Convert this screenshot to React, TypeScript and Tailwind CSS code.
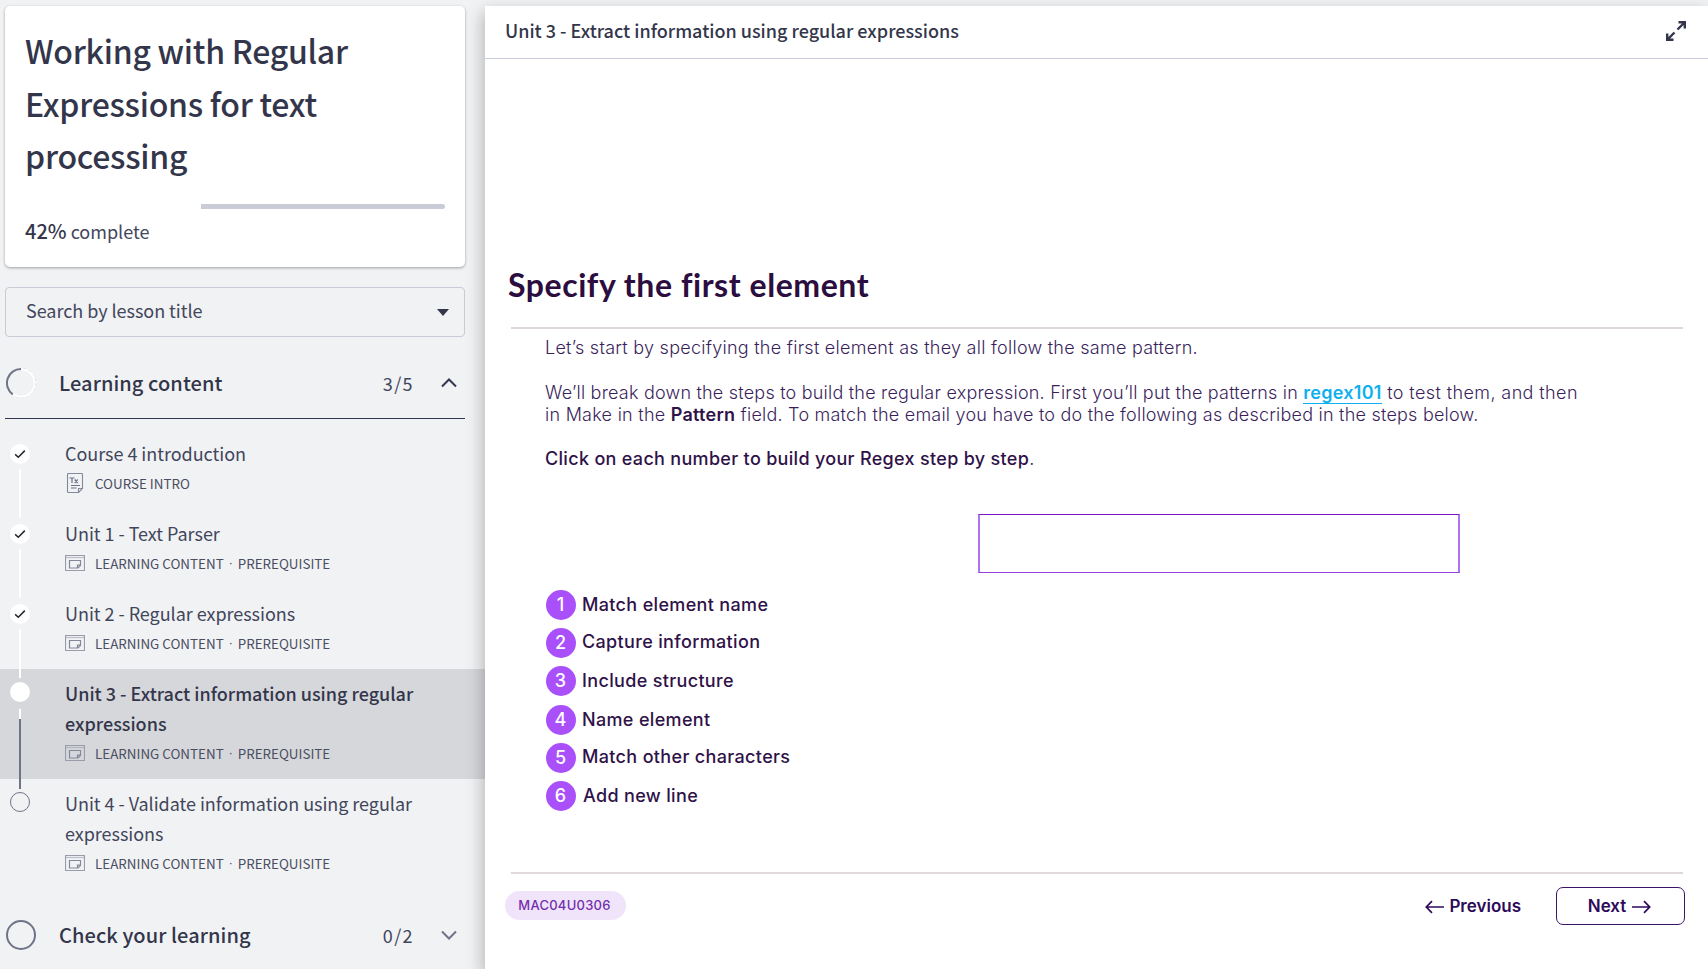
import { ReactNode } from "react";

type Status = "done" | "current" | "todo";

interface Lesson {
  title: string;
  kind: string;
  prerequisite?: boolean;
  status: Status;
}

const lessons: Lesson[] = [
  { title: "Course 4 introduction", kind: "COURSE INTRO", status: "done" },
  { title: "Unit 1 - Text Parser", kind: "LEARNING CONTENT", prerequisite: true, status: "done" },
  { title: "Unit 2 - Regular expressions", kind: "LEARNING CONTENT", prerequisite: true, status: "done" },
  { title: "Unit 3 - Extract information using regular expressions", kind: "LEARNING CONTENT", prerequisite: true, status: "current" },
  { title: "Unit 4 - Validate information using regular expressions", kind: "LEARNING CONTENT", prerequisite: true, status: "todo" },
];

const steps = [
  { label: "Match element name", row: "h-[38px]", text: "pb-[2px]" },
  { label: "Capture information", row: "h-[37px]", text: "pb-[2px]" },
  { label: "Include structure", row: "h-[39px]", text: "" },
  { label: "Name element", row: "h-[39px]", text: "" },
  { label: "Match other characters", row: "h-[38px]", text: "pb-[3px]" },
  { label: "Add new line", row: "h-[38px]", text: "pb-[2px] pl-px" },
];

function CheckIcon() {
  return (
    <svg width="20" height="20" viewBox="0 0 20 20" fill="none">
      <path d="M5.2 10.400 8.300 13.200 14.800 6.600" stroke="#22242e" strokeWidth="1.500" />
    </svg>
  );
}

function TextDocIcon() {
  return (
    <svg width="20" height="20" viewBox="0 0 20 20" fill="none" stroke="#85889a" strokeWidth="1.100">
      <path d="M2.500 1.500q0-1 1-1h13q1 0 1 1V15.500l-4 4h-10q-1 0-1-1z" />
      <path d="M17.500 15.500h-4v4" />
      <path d="M4.500 5H9.500M7 5V10M9.700 6.500l3 3.500M12.700 6.500 9.700 10" strokeWidth="1.200" stroke="#6f7387" />
      <path d="M6 12.500h9M6 15h5.500" stroke="#6f7387" />
    </svg>
  );
}

function WindowIcon() {
  return (
    <svg width="20" height="16" viewBox="0 0 20 16" fill="none" stroke="#9a9cac" strokeWidth="1.200">
      <path d="M.5.5h19v15H.5z" />
      <path d="M.5 2.500h19" opacity=".6" />
      <path d="M4.500 5.500h11v5l-2.500 2.500h-8.500z" stroke="#85889a" />
      <path d="M15.500 10.200h-3v2.800" stroke="#85889a" />
    </svg>
  );
}

function Chevron({ up, color }: { up?: boolean; color: string }) {
  return (
    <svg width="16" height="10" viewBox="0 0 16 10" fill="none" stroke={color} strokeWidth="2">
      <path d={up ? "M1 8.500 8 1.500l7 7" : "M1 1.500l7 7 7-7"} />
    </svg>
  );
}

function Timeline({ index, status }: { index: number; status: Status }) {
  if (status === "done") {
    return (
      <div className="flex w-10 flex-col items-center">
        <div className={index === 0 ? "h-[9px]" : "h-[9px] w-[2px] bg-white"} />
        <div className="mt-[6px] mb-[5px] size-5 shrink-0 rounded-full bg-white">
          <CheckIcon />
        </div>
        <div className="w-[2px] flex-1 bg-white" />
      </div>
    );
  }
  if (status === "current") {
    return (
      <div className="flex w-10 flex-col items-center">
        <div className="h-[9px] w-[2px] bg-white" />
        <div className="mt-1 mb-[7px] size-5 shrink-0 rounded-full bg-white" />
        <div className="h-[10px] w-[2px] bg-white" />
        <div className="w-[2px] flex-1 bg-[#6f7387]" />
      </div>
    );
  }
  return (
    <div className="flex w-10 flex-col items-center">
      <div className="h-[10px] w-[2px] bg-[#6f7387]" />
      <div className="mt-[3px] size-5 rounded-full border border-[#6f7387]" />
    </div>
  );
}

function LessonRow({ lesson, index }: { lesson: Lesson; index: number }) {
  const current = lesson.status === "current";
  return (
    <li className={current ? "flex bg-[#d6d7db]" : "flex"}>
      <Timeline index={index} status={lesson.status} />
      <div className="w-[380px] pt-[9px] pb-[11px] pl-[25px]">
        <div className={current ? "text-[18px] leading-[30px] font-medium" : "text-[18px] leading-[30px] tracking-[-0.040px] text-[#42465b]"}>
          {lesson.title}
        </div>
        <div className="flex h-[30px] items-center text-[13.4px] text-[#4a4e62]">
          <span className="w-[30px]">{lesson.prerequisite ? <WindowIcon /> : <TextDocIcon />}</span>
          <span>{lesson.kind}</span>
          {lesson.prerequisite && (
            <>
              <span className="w-[14px] text-center font-['Liberation_Sans',sans-serif]">·</span>
              <span>PREREQUISITE</span>
            </>
          )}
        </div>
      </div>
    </li>
  );
}

function Section({ title, count, ring, chevron }: { title: string; count: string; ring: ReactNode; chevron: ReactNode }) {
  return (
    <div className="flex h-[30px] items-center">
      <div className="w-[54px] pl-px">{ring}</div>
      <h2 className="flex-1 text-[20px] leading-[30px] font-medium tracking-[0.08px]">{title}</h2>
      <span className="text-[18px] tracking-[1.400px] text-[#42465b]">{count}</span>
      <span className="mr-[8px] ml-[27px]">{chevron}</span>
    </div>
  );
}

function Sidebar() {
  return (
    <aside className="w-[485px] shrink-0 pt-[6px] text-[#33364b]">
      <div className="mx-[5px] h-[261px] w-[460px] rounded-[5px] bg-white px-5 pt-[18px] shadow-[0_1px_3px_rgba(0,0,0,0.35)]">
        <h1 className="text-[32px] leading-[52.500px] font-medium tracking-[-0.260px]">
          Working with Regular
          <br />
          Expressions for text
          <br />
          processing
        </h1>
        <div className="mt-[22px] flex h-[5px]">
          <div className="w-[176px]" />
          <div className="flex-1 rounded-r-full bg-[#c9cbd6]" />
        </div>
        <p className="mt-[7px] text-[18px] leading-[30px] text-[#42465b]">
          <span className="text-[20px] font-medium text-[#33364b]">42%</span> complete
        </p>
      </div>

      <div className="mx-[5px] mt-5 flex h-[50px] w-[460px] items-center justify-between rounded-[4px] border border-[#c9cbd6] pr-[15px] pl-[20px]">
        <span className="pb-[3px] text-[18px] tracking-[-0.040px] text-[#42465b]">Search by lesson title</span>
        <svg width="12" height="7" viewBox="0 0 12 7">
          <path d="M0 0h12L6 7z" fill="#33364b" />
        </svg>
      </div>

      <div className="mx-[5px] mt-[31px] w-[460px] border-b border-[#33374f] pb-5">
        <Section
          title="Learning content"
          count="3/5"
          ring={
            <svg width="30" height="30" viewBox="0 0 30 30" fill="none">
              <circle cx="15" cy="15" r="14.400" stroke="#b4b6c2" strokeWidth="1" strokeDasharray="3 2" />
              <circle cx="15" cy="15" r="13.700" stroke="#fff" strokeWidth="2" />
              <path d="M6.770 26.330A14 14 0 0 1 15 1" stroke="#6f7387" strokeWidth="2" />
            </svg>
          }
          chevron={<Chevron up color="#33374f" />}
        />
      </div>

      <ul className="mt-[10px]">
        {lessons.map((lesson, i) => (
          <LessonRow key={lesson.title} lesson={lesson} index={i} />
        ))}
      </ul>

      <div className="mx-[5px] mt-[31px] w-[460px]">
        <Section
          title="Check your learning"
          count="0/2"
          ring={<div className="size-[30px] rounded-full border-2 border-[#6f7387]" />}
          chevron={<Chevron color="#6f7387" />}
        />
      </div>
    </aside>
  );
}

function Arrow({ left }: { left?: boolean }) {
  return (
    <svg width="19" height="14" viewBox="0 0 19 14" fill="none" stroke="#2d0a5a" strokeWidth="1.700">
      <path d={left ? "M19 7H1.500M7 1.200 1.300 7 7 12.800" : "M0 7h17.500M12 1.200 17.700 7 12 12.800"} />
    </svg>
  );
}

function Content() {
  return (
    <main className="relative z-10 mt-[6px] h-[963px] flex-1 bg-white shadow-[-2px_6px_16px_rgba(0,0,0,0.26)]">
      <header className="flex h-[53px] items-center justify-between border-b border-[#c9cbdc] pr-[22px] pl-5">
        <span className="pb-[4px] font-['Noto_Sans_CJK_SC',sans-serif] text-[18px] leading-[30px] font-medium text-[#33364b]">
          Unit 3 - Extract information using regular expressions
        </span>
        <svg className="-mt-[2px]" width="20" height="20" viewBox="0 0 20 20" fill="none" stroke="#33364b" strokeWidth="2.400">
          <path d="M11.500 8.500 18.500 1.500M12.500 1.200h6.300v6.300M8.500 11.500l-7 7M1.200 12.500v6.300h6.300" />
        </svg>
      </header>

      <div className="pt-[202px] pr-[25px] pl-[26px] font-['Inter',sans-serif] text-[#3b1f5c]">
        <h2 className="-ml-[3px] h-[66px] font-['Lato',sans-serif] text-[32px] leading-[48px] font-bold tracking-[0.560px] text-[#2b0d40]">
          Specify the first element
        </h2>
        <div className="h-[2px] bg-[#dfd8dc]" />

        <div className="pt-[8px] pl-[34px] text-[18px] leading-[22px] font-light tracking-[0.26px] whitespace-nowrap">
          <p>Let’s start by specifying the first element as they all follow the same pattern.</p>
          <p className="mt-[23px]">
            <span className="tracking-[0.21px]">
              We’ll break down the steps to build the regular expression. First you’ll put the patterns in{" "}
            </span>
            <a className="border-b border-[#0fb0ee] font-semibold tracking-[0.260px] text-[#0fb0ee]">regex101</a>
            <span className="tracking-[0.400px]"> to test them, and then</span>
            <br />
            in Make in the <b className="font-semibold tracking-[0.250px] text-[#2f1248]">Pattern</b>
            <span className="tracking-[0.220px]"> field. To match the email you have to do the following as described in the steps below.</span>
          </p>
          <p className="mt-[22px] font-medium tracking-[0.310px] text-[#2f1248]">
            Click on each number to build your Regex step by step<span className="font-light">.</span>
          </p>
        </div>

        <div className="mt-[44px] ml-[467px] h-[59px] w-[482px] border-x-2 border-y border-x-[#b072ec] border-t-[#7a12cc] border-b-[#9440dc]" />

        <ol className="mt-[13px] ml-[35px] text-[18px] font-medium tracking-[0.340px] text-[#2f1248]">
          {steps.map((step, i) => (
            <li key={step.label} className={`flex items-center gap-[6px] ${step.row}`}>
              <span className="flex size-[30px] items-center justify-center rounded-full bg-[#a950fb] pr-px pb-px tracking-normal text-white">
                {i + 1}
              </span>
              <span className={step.text}>{step.label}</span>
            </li>
          ))}
        </ol>

        <div className="mt-[57px] h-[2px] bg-[#dfd8dc]" />

        <footer className="-mr-[2px] -ml-[6px] flex items-center pt-[13px]">
          <span className="-mt-px flex h-[29px] w-[121px] items-center justify-center rounded-full bg-[#f0e4fb] pr-[2px] text-[13px] font-medium tracking-[0.25px] text-[#7330ab]">
            MAC04U0306
          </span>
          <button className="ml-auto flex items-center gap-[5px] pt-px text-[17px] font-semibold text-[#2d0a5a]">
            <Arrow left />
            Previous
          </button>
          <button className="ml-[35px] flex h-[38px] w-[129px] items-center justify-center gap-[6px] rounded-[7px] border-[1.500px] border-[#3a1466] pt-px pr-[2px] text-[17px] font-semibold text-[#2d0a5a]">
            Next
            <Arrow />
          </button>
        </footer>
      </div>
    </main>
  );
}

export default function App() {
  return (
    <div className="flex h-[969px] w-[1708px] overflow-hidden bg-[#f1f2f4] font-['Noto_Sans_CJK_SC',sans-serif]">
      <Sidebar />
      <Content />
    </div>
  );
}
